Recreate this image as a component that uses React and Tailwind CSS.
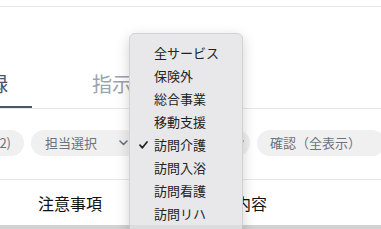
import React from "react"

const SERVICES = ["全サービス", "保険外", "総合事業", "移動支援", "訪問介護", "訪問入浴", "訪問看護", "訪問リハ", "通所介護"]

function Chevron() {
  return (
    <svg width="9" height="6" viewBox="0 0 9 6" fill="none" className="shrink-0">
      <path d="M1 1l3.5 3.5L8 1" stroke="#6b7280" strokeWidth="1.6" strokeLinecap="round" strokeLinejoin="round" />
    </svg>
  )
}

function ServiceMenu({ selected }) {
  return (
    <div className="absolute left-[129px] top-[33px] w-[114px] h-[230px] rounded-[6px] bg-[#e8e8ea] border border-[#d2d2d4] shadow-[0_4px_14px_rgba(0,0,0,0.18)] pt-[7px] overflow-hidden">
      {SERVICES.map((s) => (
        <div key={s} className="relative h-[23px] flex items-center pl-[24px] text-[13px] text-[#222]">
          {s === selected && (
            <svg width="9" height="8" viewBox="0 0 9 8" className="absolute left-[9px] top-[8px]" fill="none">
              <path d="M1 4.2l2.4 2.6L8 1" stroke="#222" strokeWidth="1.7" strokeLinecap="round" strokeLinejoin="round" />
            </svg>
          )}
          {s}
        </div>
      ))}
    </div>
  )
}

export default function App() {
  return (
    <div
      className="relative w-[381px] h-[229px] overflow-hidden bg-white"
      style={{ fontFamily: '"Noto Sans CJK JP", "Noto Sans", sans-serif' }}
    >
      <div className="h-[7px] border-b border-[#e5e7eb]" />

      <div className="flex items-end border-b border-[#e5e7eb] h-[102px]">
        <div className="-ml-[56px] px-6 pb-[8px] border-b-2 border-[#4b5563] text-[20px] leading-[28px] text-[#4b5563] whitespace-nowrap">
          記録
        </div>
        <div className="ml-[36px] pl-6 pb-[10px] text-[20px] leading-[28px] text-[#9ca3af] whitespace-nowrap">
          指示書
        </div>
      </div>

      <div className="pt-[21px] pb-[23px] border-b border-[#e5e7eb]">
        <div className="flex gap-[7px] -ml-[56px] text-[13px] text-[#6b7280] whitespace-nowrap">
          <div className="w-[80px] h-[26px] shrink-0 rounded-full bg-[#f0f0f0] flex items-center justify-end pr-[13px]">
            未確認 (2)
          </div>
          <div className="w-[107px] h-[26px] shrink-0 rounded-full bg-[#f0f0f0] flex items-center pl-[14px] pr-[10px]">
            担当選択
            <span className="ml-auto"><Chevron /></span>
          </div>
          <div className="w-[105px] h-[26px] shrink-0 rounded-full bg-[#f0f0f0] flex items-center pl-[14px] pr-[6px]">
            訪問介護
            <span className="ml-auto"><Chevron /></span>
          </div>
          <div className="h-[26px] shrink-0 rounded-full bg-[#f0f0f0] flex items-center pl-[13px] pr-[24px]">
            確認（全表示）
          </div>
        </div>
      </div>

      <div className="flex items-center h-[49px] border-b-[4px] border-[#dedede] text-[16px] text-[#111]">
        <div className="w-[235px] pl-[38px] shrink-0">注意事項</div>
        <div>内容</div>
      </div>

      <ServiceMenu selected="訪問介護" />
      <div className="absolute left-0 right-0 top-[225px] h-[4px] bg-black/5 pointer-events-none" />
    </div>
  )
}
